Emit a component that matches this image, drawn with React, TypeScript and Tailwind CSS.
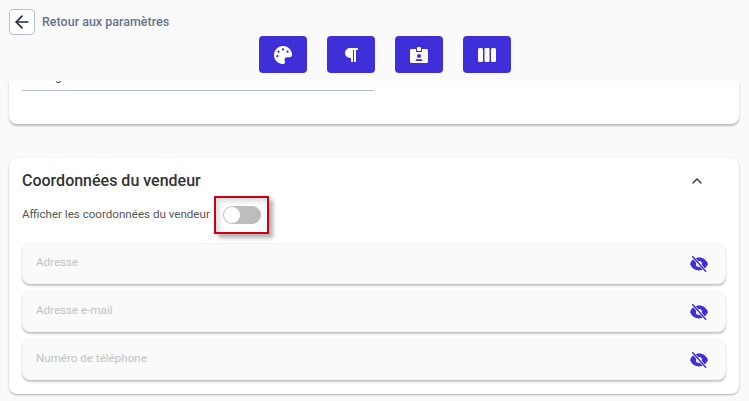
import React from 'react';
import { ArrowLeft, ChevronUp } from 'lucide-react';
import { FaPalette, FaParagraph, FaIdCardAlt } from 'react-icons/fa';

const TOOLBAR_BUTTON = "flex h-[37px] w-[48px] items-center justify-center rounded-[4px] bg-[#3f2fd9] text-white";

const FIELDS = ['Adresse', 'Adresse e-mail', 'Numéro de téléphone'];

const EyeOff = () => (
    <svg width="18" height="16" viewBox="0 0 18 16" className="mt-[2px] text-[#3f2fd9]">
        <path fillRule="evenodd" fill="currentColor" d="M0 8C1.8 3.6 5 1.6 9 1.6S16.2 3.6 18 8C16.2 12.4 13 14.4 9 14.4S1.8 12.4 0 8ZM9 5A3 3 0 1 0 9 11A3 3 0 1 0 9 5Z" />
        <path d="M2.6 0.6L15.6 15.2" stroke="white" strokeWidth="2.6" />
        <path d="M2.6 0.6L15.6 15.2" stroke="currentColor" strokeWidth="1.5" strokeLinecap="round" />
    </svg>
);

const ColumnsIcon = () => (
    <svg width="18" height="14" viewBox="0 0 18 14" fill="currentColor">
        <rect x="0" y="0" width="5" height="14" rx="1.5" />
        <rect x="6.5" y="0" width="5" height="14" rx="1" />
        <rect x="13" y="0" width="5" height="14" rx="1.5" />
    </svg>
);

const Field: React.FC<{ label: string }> = ({ label }) => (
    <div className="flex h-[41px] items-center justify-between rounded-[8px] border border-[#f2f2f2] bg-[#fafafa] pb-[1px] pl-[13px] pr-[17px] shadow-[0_2px_2px_rgba(0,0,0,0.22)]">
        <span className="text-[11.6px] text-[#c2c2c2]">{label}</span>
        <EyeOff />
    </div>
);

export default function App() {
    return (
        <div className="flex h-[401px] w-[749px] flex-col overflow-hidden bg-[#fafafa] font-['Roboto',sans-serif]">
            <header className="h-[81px] shrink-0 pl-[9px] pt-[9px]">
                <div className="flex items-center gap-[7px]">
                    <button className="flex h-[26px] w-[26px] items-center justify-center rounded-[4px] border border-[#b4bfd2] bg-white text-[#1e293b]">
                        <ArrowLeft size={20} strokeWidth={2} />
                    </button>
                    <span className="text-[12.5px] font-medium text-[#64748b]">Retour aux paramètres</span>
                </div>
                <div className="ml-[250px] mt-[1px] flex gap-[20px]">
                    <button className={TOOLBAR_BUTTON}><FaPalette size={18} /></button>
                    <button className={TOOLBAR_BUTTON}><FaParagraph size={16} /></button>
                    <button className={TOOLBAR_BUTTON}><FaIdCardAlt size={18} /></button>
                    <button className={TOOLBAR_BUTTON}><ColumnsIcon /></button>
                </div>
            </header>

            <main className="flex flex-col gap-[34px] pl-[9px] pr-[10px]">
                <section className="h-[43px] rounded-b-[8px] bg-white px-[13px] shadow-[0_2px_2px_rgba(0,0,0,0.25)]">
                    {/* input scrolled under the header, only the descender is left */}
                    <div className="h-[10px] w-[352px] overflow-hidden border-b border-[#b3bdd6]">
                        <span className="-mt-[12px] block pl-[33px] text-[12px] leading-[14px] text-[#555555]">g</span>
                    </div>
                </section>

                <section className="h-[236px] rounded-[8px] bg-white px-[13px] pt-[13px] shadow-[0_1px_2px_rgba(0,0,0,0.3)]">
                    <div className="flex items-center justify-between pr-[21px]">
                        <h2 className="text-[16px] font-medium leading-[20px] text-[#333333]">Coordonnées du vendeur</h2>
                        <ChevronUp size={16} strokeWidth={2} className="text-[#333333]" />
                    </div>
                    <div className="mt-[5px] flex items-center gap-[4px]">
                        <span className="text-[11.6px] text-[#555555]">Afficher les coordonnées du vendeur</span>
                        <div className="flex h-[38px] w-[55px] items-center border-2 border-[#cc0011] pl-[7px] shadow-[4px_4px_4px_rgba(0,0,0,0.3),inset_4px_4px_4px_rgba(0,0,0,0.12)]">
                            <div className="flex h-[18px] w-[38px] items-center rounded-full bg-[#bdbdbd] pl-[1px]">
                                <div className="h-[16px] w-[16px] rounded-full bg-white" />
                            </div>
                        </div>
                    </div>
                    <div className="mt-[9px] flex flex-col gap-[7px]">
                        {FIELDS.map(label => <Field key={label} label={label} />)}
                    </div>
                </section>
            </main>
        </div>
    );
}
